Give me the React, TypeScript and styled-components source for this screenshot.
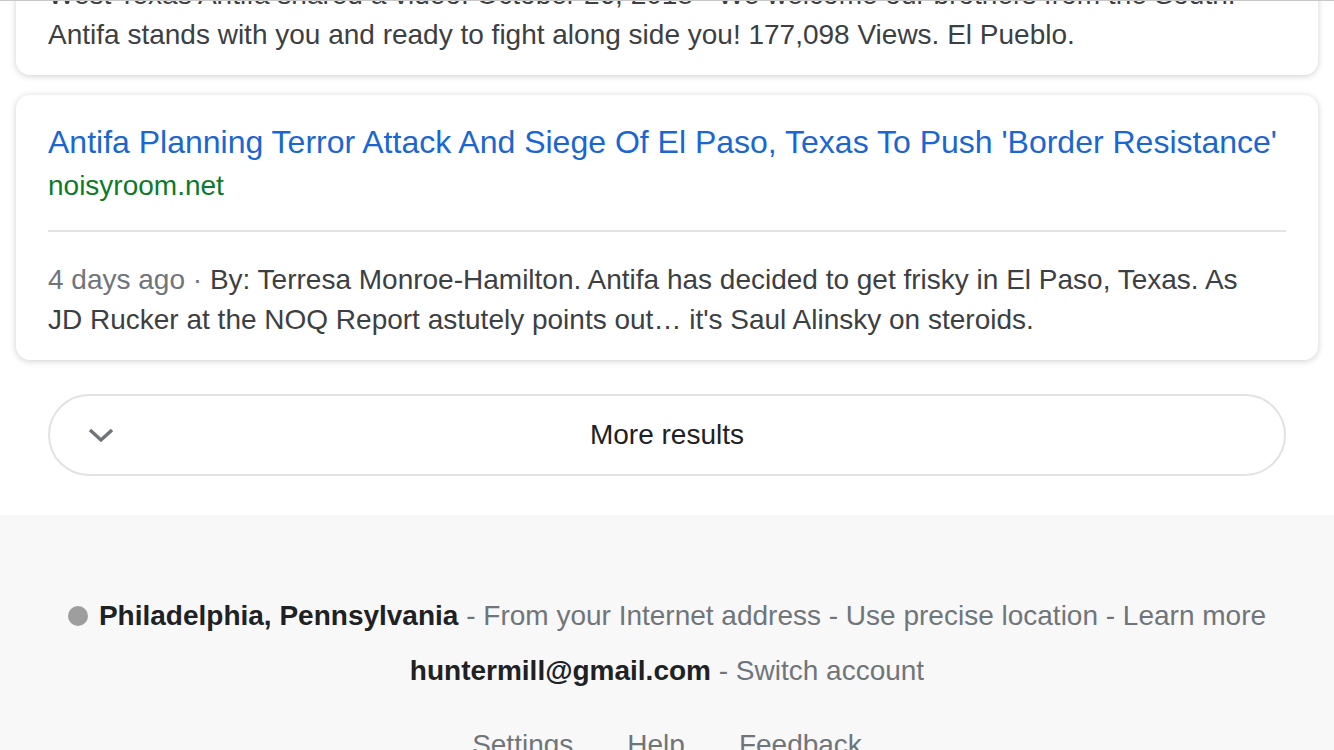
import React from "react";
import styled, { createGlobalStyle } from "styled-components";

const Global = createGlobalStyle`
  html, body { margin: 0; padding: 0; background: #fff; }
  body { font-family: "Liberation Sans", Arial, sans-serif; -webkit-font-smoothing: antialiased; overflow: hidden; }
`;

const Page = styled.div`
  width: 1334px;
  height: 750px;
  overflow: hidden;
  position: relative;
  border-top: 1px solid #c8c8c8;
  box-sizing: border-box;
`;

const Results = styled.div`
  display: flex;
  flex-direction: column;
  gap: 20px;
  padding: 0 16px;
  margin-top: -46px;
`;

const Card = styled.div`
  background: #fff;
  border-radius: 14px;
  box-shadow: 0 1px 6px rgba(32, 33, 36, 0.22);
  padding: 20px 32px 20px;
`;

const Title = styled.a`
  display: block;
  color: #1a66d2;
  font-size: 32px;
  line-height: 44px;
  padding-top: 5px;
  text-decoration: none;
  white-space: nowrap;
`;

const Site = styled.div`
  color: #0d7a2a;
  font-size: 28px;
  line-height: 40px;
  margin-top: 2px;
`;

const Divider = styled.hr`
  border: 0;
  border-top: 2px solid #e3e3e3;
  margin: 24px 0 28px;
`;

const Snippet = styled.div`
  color: #3c4043;
  font-size: 28px;
  line-height: 40px;
  white-space: nowrap;
`;

const Age = styled.span`
  color: #70757a;
`;

const MoreWrap = styled.div`
  padding: 34px 48px 39px;
`;

const MoreButton = styled.button`
  box-sizing: border-box;
  width: 100%;
  height: 82px;
  border: 2px solid #e2e2e2;
  border-radius: 41px;
  background: #fff;
  display: grid;
  grid-template-columns: 100px 1fr 100px;
  align-items: center;
  padding: 0;
  font-family: inherit;
  font-size: 28px;
  color: #202124;
`;

const Chevron = styled.span`
  display: flex;
  justify-content: center;
  padding-left: 2px;
`;

const Footer = styled.footer`
  background: #f8f8f8;
  display: flex;
  flex-direction: column;
  align-items: center;
  padding-top: 82px;
  height: 300px;
  font-size: 28px;
  color: #70757a;
`;

const FooterLine = styled.div<{ $mb?: number }>`
  display: flex;
  align-items: center;
  line-height: 38px;
  white-space: nowrap;
  margin-bottom: ${(p) => p.$mb ?? 17}px;
`;

const Dot = styled.span`
  width: 20px;
  height: 20px;
  border-radius: 50%;
  background: #9e9e9e;
  margin-right: 11px;
`;

const Strong = styled.b`
  color: #202124;
  font-weight: 700;
`;

const Links = styled.div`
  display: flex;
  gap: 54px;
  line-height: 38px;
`;

export default function App() {
  return (
    <>
      <Global />
      <Page>
        <Results>
          <Card>
            <Snippet>
              West Texas Antifa shared a video. October 26, 2018 · We welcome our brothers from the South.
              <br />
              Antifa stands with you and ready to fight along side you! 177,098 Views. El Pueblo.
            </Snippet>
          </Card>
          <Card>
            <Title href="#">
              Antifa Planning Terror Attack And Siege Of El Paso, Texas To Push 'Border Resistance'
            </Title>
            <Site>noisyroom.net</Site>
            <Divider />
            <Snippet>
              <Age>4 days ago · </Age>By: Terresa Monroe-Hamilton. Antifa has decided to get frisky in El Paso, Texas. As
              <br />
              JD Rucker at the NOQ Report astutely points out… it's Saul Alinsky on steroids.
            </Snippet>
          </Card>
        </Results>
        <MoreWrap>
          <MoreButton>
            <Chevron>
              <svg width="26" height="16" viewBox="0 0 26 16">
                <path d="M2 3 L13 13 L24 3" fill="none" stroke="#70757a" strokeWidth="3.5" />
              </svg>
            </Chevron>
            <span>More results</span>
            <span />
          </MoreButton>
        </MoreWrap>
        <Footer>
          <FooterLine>
            <Dot />
            <Strong>Philadelphia, Pennsylvania</Strong>&nbsp;- From your Internet address - Use precise location - Learn more
          </FooterLine>
          <FooterLine $mb={36}>
            <Strong>huntermill@gmail.com</Strong>&nbsp;- Switch account
          </FooterLine>
          <Links>
            <span>Settings</span>
            <span>Help</span>
            <span>Feedback</span>
          </Links>
        </Footer>
      </Page>
    </>
  );
}
